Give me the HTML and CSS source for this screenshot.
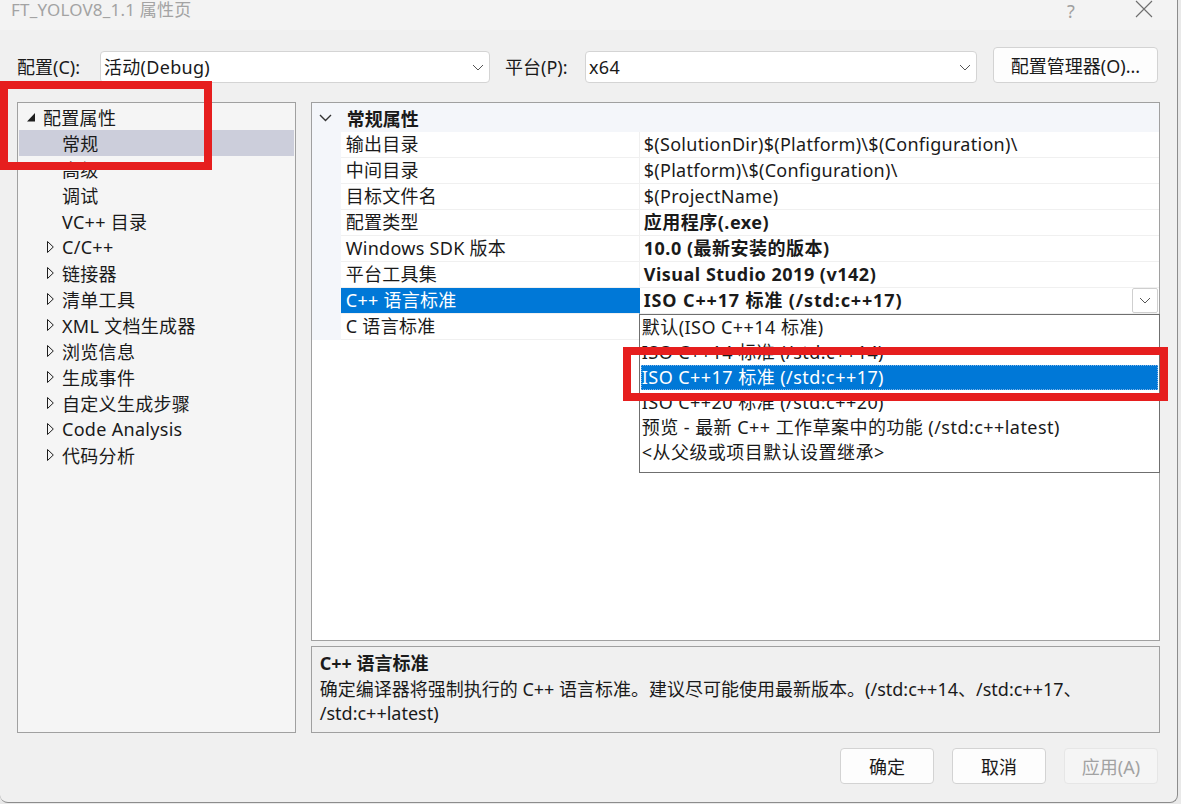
FILE: index.html
```html
<!DOCTYPE html>
<html lang="zh-CN">
<head>
<meta charset="utf-8">
<title>FT_YOLOV8_1.1 属性页</title>
<link rel="stylesheet" href="styles.css">
</head>
<body>
<div class="dialog">
  <div class="titlebar">
    <span class="title">FT_YOLOV8_1.1 属性页</span>
    <span class="help">?</span>
    <span class="close"><svg width="18" height="18" viewBox="0 0 18 18"><path d="M1 1 L17 17 M17 1 L1 17" stroke="#6e6e6e" stroke-width="1.1" fill="none"/></svg></span>
  </div>

  <div class="toolbar">
    <span class="lbl lbl-cfg">配置(C):</span>
    <div class="combo combo-cfg"><span>活动(Debug)</span><svg class="chev" width="12" height="7" viewBox="0 0 12 7"><polyline points="1,1 6,6 11,1" fill="none" stroke="#555" stroke-width="1"/></svg></div>
    <span class="lbl lbl-plat">平台(P):</span>
    <div class="combo combo-plat"><span>x64</span><svg class="chev" width="12" height="7" viewBox="0 0 12 7"><polyline points="1,1 6,6 11,1" fill="none" stroke="#555" stroke-width="1"/></svg></div>
    <div class="btn btn-mgr">配置管理器(O)...</div>
  </div>

  <div class="main">
    <div class="tree">
      <div class="node root"><span class="tw tw-root"><svg width="8" height="9" viewBox="0 0 8 9"><polygon points="8,0 8,8.5 0,8.5" fill="#1e1e1e"/></svg></span><span>配置属性</span></div>
      <div class="node leaf sel">常规</div>
      <div class="node leaf">高级</div>
      <div class="node leaf">调试</div>
      <div class="node leaf">VC++ 目录</div>
      <div class="node"><span class="tw"><svg width="7" height="12" viewBox="0 0 7 12"><polygon points="0.5,0.5 6.3,6 0.5,11.5" fill="none" stroke="#1e1e1e" stroke-width="1"/></svg></span><span>C/C++</span></div>
      <div class="node"><span class="tw"><svg width="7" height="12" viewBox="0 0 7 12"><polygon points="0.5,0.5 6.3,6 0.5,11.5" fill="none" stroke="#1e1e1e" stroke-width="1"/></svg></span><span>链接器</span></div>
      <div class="node"><span class="tw"><svg width="7" height="12" viewBox="0 0 7 12"><polygon points="0.5,0.5 6.3,6 0.5,11.5" fill="none" stroke="#1e1e1e" stroke-width="1"/></svg></span><span>清单工具</span></div>
      <div class="node"><span class="tw"><svg width="7" height="12" viewBox="0 0 7 12"><polygon points="0.5,0.5 6.3,6 0.5,11.5" fill="none" stroke="#1e1e1e" stroke-width="1"/></svg></span><span>XML 文档生成器</span></div>
      <div class="node"><span class="tw"><svg width="7" height="12" viewBox="0 0 7 12"><polygon points="0.5,0.5 6.3,6 0.5,11.5" fill="none" stroke="#1e1e1e" stroke-width="1"/></svg></span><span>浏览信息</span></div>
      <div class="node"><span class="tw"><svg width="7" height="12" viewBox="0 0 7 12"><polygon points="0.5,0.5 6.3,6 0.5,11.5" fill="none" stroke="#1e1e1e" stroke-width="1"/></svg></span><span>生成事件</span></div>
      <div class="node"><span class="tw"><svg width="7" height="12" viewBox="0 0 7 12"><polygon points="0.5,0.5 6.3,6 0.5,11.5" fill="none" stroke="#1e1e1e" stroke-width="1"/></svg></span><span>自定义生成步骤</span></div>
      <div class="node"><span class="tw"><svg width="7" height="12" viewBox="0 0 7 12"><polygon points="0.5,0.5 6.3,6 0.5,11.5" fill="none" stroke="#1e1e1e" stroke-width="1"/></svg></span><span>Code Analysis</span></div>
      <div class="node"><span class="tw"><svg width="7" height="12" viewBox="0 0 7 12"><polygon points="0.5,0.5 6.3,6 0.5,11.5" fill="none" stroke="#1e1e1e" stroke-width="1"/></svg></span><span>代码分析</span></div>
    </div>

    <div class="right">
      <div class="grid">
        <div class="ghead">
          <span class="gchev"><svg width="13" height="8" viewBox="0 0 13 8"><polyline points="1,1 6.5,6.5 12,1" fill="none" stroke="#333" stroke-width="1.4"/></svg></span>
          <span class="ghead-text">常规属性</span>
        </div>
        <div class="grow"><div class="gut"></div><div class="gname">输出目录</div><div class="gval">$(SolutionDir)$(Platform)\$(Configuration)\</div></div>
        <div class="grow"><div class="gut"></div><div class="gname">中间目录</div><div class="gval">$(Platform)\$(Configuration)\</div></div>
        <div class="grow"><div class="gut"></div><div class="gname">目标文件名</div><div class="gval">$(ProjectName)</div></div>
        <div class="grow"><div class="gut"></div><div class="gname">配置类型</div><div class="gval b">应用程序(.exe)</div></div>
        <div class="grow"><div class="gut"></div><div class="gname">Windows SDK 版本</div><div class="gval b">10.0 (最新安装的版本)</div></div>
        <div class="grow"><div class="gut"></div><div class="gname">平台工具集</div><div class="gval b">Visual Studio 2019 (v142)</div></div>
        <div class="grow cur"><div class="gut"></div><div class="gname">C++ 语言标准</div><div class="gval b"><span class="vtext">ISO C++17 标准 (/std:c++17)</span><span class="ddbtn"><svg width="12" height="7" viewBox="0 0 12 7"><polyline points="1,1 6,6 11,1" fill="none" stroke="#555" stroke-width="1"/></svg></span></div></div>
        <div class="grow"><div class="gut"></div><div class="gname">C 语言标准</div><div class="gval"></div></div>

        <div class="ddlist">
          <div class="dditem">默认(ISO C++14 标准)</div>
          <div class="dditem">ISO C++14 标准 (/std:c++14)</div>
          <div class="dditem sel">ISO C++17 标准 (/std:c++17)</div>
          <div class="dditem">ISO C++20 标准 (/std:c++20)</div>
          <div class="dditem">预览 - 最新 C++ 工作草案中的功能 (/std:c++latest)</div>
          <div class="dditem">&lt;从父级或项目默认设置继承&gt;</div>
        </div>
      </div>
      <div class="desc">
        <div class="desc-title">C++ 语言标准</div>
        <div class="desc-text">确定编译器将强制执行的 C++ 语言标准。建议尽可能使用最新版本。(/std:c++14、/std:c++17、<br>/std:c++latest)</div>
      </div>
    </div>
  </div>

  <div class="buttons">
    <div class="btn">确定</div>
    <div class="btn">取消</div>
    <div class="btn disabled">应用(A)</div>
  </div>
</div>

<div class="redbox r1"></div>
<div class="redbox r2"></div>
</body>
</html>
```

FILE: styles.css
```css
* { box-sizing: border-box; }
html, body { margin: 0; padding: 0; }
body {
  width: 1181px;
  height: 804px;
  overflow: hidden;
  position: relative;
  background: #e9e9e9;
  font-family: "Noto Sans", "Noto Sans CJK SC", sans-serif;
  font-size: 18px;
  color: #1a1a1a;
}

.dialog {
  width: 1178px;
  height: 803px;
  background: #f0f0f0;
  border-right: 1px solid #8c8c8c;
  border-bottom: 1px solid #8c8c8c;
  border-bottom-left-radius: 8px;
  border-bottom-right-radius: 8px;
  display: flex;
  flex-direction: column;
}

/* title bar */
.titlebar {
  height: 30px;
  background: #f3f3f3;
  display: flex;
  align-items: flex-start;
  padding-left: 11px;
  padding-top: 0;
}
.title { flex: 1; color: #a3a3a3; font-size: 17px; line-height: 20px; letter-spacing: 0.2px; }
.help { color: #a0a0a0; font-size: 18px; width: 12px; margin-right: 56px; line-height: 22px; }
.close { width: 18px; height: 18px; margin-right: 24px; margin-top: 0; display: flex; }

/* toolbar */
.toolbar {
  height: 72px;
  display: flex;
  align-items: flex-end;
  padding: 0 19px 19px 17px;
}
.lbl { height: 32px; line-height: 32px; }
.lbl-cfg { width: 83px; }
.lbl-plat { width: 80px; margin-left: 15px; }
.combo {
  height: 32px;
  background: #fff;
  border: 1px solid #d4d4d4;
  border-radius: 4px;
  display: flex;
  align-items: center;
  padding-left: 3px;
  padding-right: 5px;
  line-height: 30px;
  letter-spacing: 0.3px;
}
.combo span { flex: 1; }
.combo-cfg { width: 390px; }
.combo-plat { width: 392px; }
.chev { display: block; }

.btn {
  width: 94px;
  height: 36px;
  background: #fdfdfd;
  border: 1px solid #d3d3d3;
  border-radius: 4px;
  display: flex;
  align-items: center;
  justify-content: center;
  color: #1a1a1a;
}
.btn-mgr { width: 165px; margin-left: 16px; }
.btn.disabled { background: #f5f5f5; border-color: #e6e6e6; color: #a2a2a2; }

/* main */
.main {
  height: 631px;
  display: flex;
  padding: 0 17px;
  gap: 15px;
}
.tree {
  width: 279px;
  height: 631px;
  background: #f5f5f5;
  border: 1px solid #a0a0a0;
  padding: 1px;
  letter-spacing: 0.3px;
}
.node {
  height: 26px;
  display: flex;
  align-items: center;
  white-space: nowrap;
}
.node.leaf { padding-left: 43px; }
.node.sel { background: #cccedb; }
.tw {
  width: 15px;
  margin-left: 28px;
  display: flex;
  align-items: center;
}
.tw-root { width: 16px; margin-left: 8px; padding-top: 1px; }
.tw svg { display: block; }

.right {
  width: 850px;
  display: flex;
  flex-direction: column;
  gap: 5px;
}
.grid {
  height: 539px;
  background: #fff;
  border: 1px solid #a0a0a0;
  position: relative;
}
.ghead {
  height: 29px;
  background: #f4f6fa;
  display: flex;
  align-items: center;
}
.gchev { width: 35px; padding-left: 7px; display: flex; align-items: center; }
.ghead-text { font-weight: bold; }
.grow {
  height: 26px;
  display: grid;
  grid-template-columns: 29px 299px 1fr;
}
.gut { background: #f4f6fa; }
.gname, .gval {
  border-bottom: 1px solid #f0f0f0;
  line-height: 25px;
  white-space: nowrap;
  overflow: hidden;
  letter-spacing: 0.28px;
}
.gname { padding-left: 5px; border-right: 1px solid #f0f0f0; }
.gval { padding-left: 4px; }
.gval.b { font-weight: bold; letter-spacing: 0.5px; }
.grow.cur .gname { background: #0078d7; color: #fff; border-right-color: #0078d7; }
.grow.cur .gval { display: flex; align-items: center; padding-right: 1px; }
.vtext { flex: 1; letter-spacing: 0.85px; }
.ddbtn {
  width: 26px;
  height: 25px;
  border: 1px solid #cfcfcf;
  border-radius: 2px;
  background: #fff;
  display: flex;
  align-items: center;
  justify-content: center;
}

.ddlist {
  position: absolute;
  left: 327px;
  top: 211px;
  width: 521px;
  height: 159px;
  background: #fff;
  border: 1px solid #6f6f6f;
  padding: 0 1px;
  letter-spacing: 0.45px;
}
.dditem {
  height: 25px;
  line-height: 25px;
  padding-left: 1px;
  white-space: nowrap;
}
.dditem.sel {
  background: #0078d7;
  color: #fff;
  outline: 1px dotted #7fb3e6;
  outline-offset: -1px;
}

.desc {
  height: 87px;
  background: #f0f0f0;
  border: 1px solid #a0a0a0;
  padding: 4px 8px 0 8px;
}
.desc-title { font-weight: bold; line-height: 24px; margin-bottom: 2px; }
.desc-text { line-height: 24px; white-space: nowrap; }

/* bottom buttons */
.buttons {
  display: flex;
  justify-content: flex-end;
  gap: 18px;
  padding: 15px 19px 0 0;
}

/* red annotation boxes */
.redbox {
  position: absolute;
  border: 8px solid #e61e1e;
}
.r1 { left: 0; top: 81px; width: 212px; height: 89px; }
.r2 { left: 623px; top: 347px; width: 545px; height: 54px; }
```
